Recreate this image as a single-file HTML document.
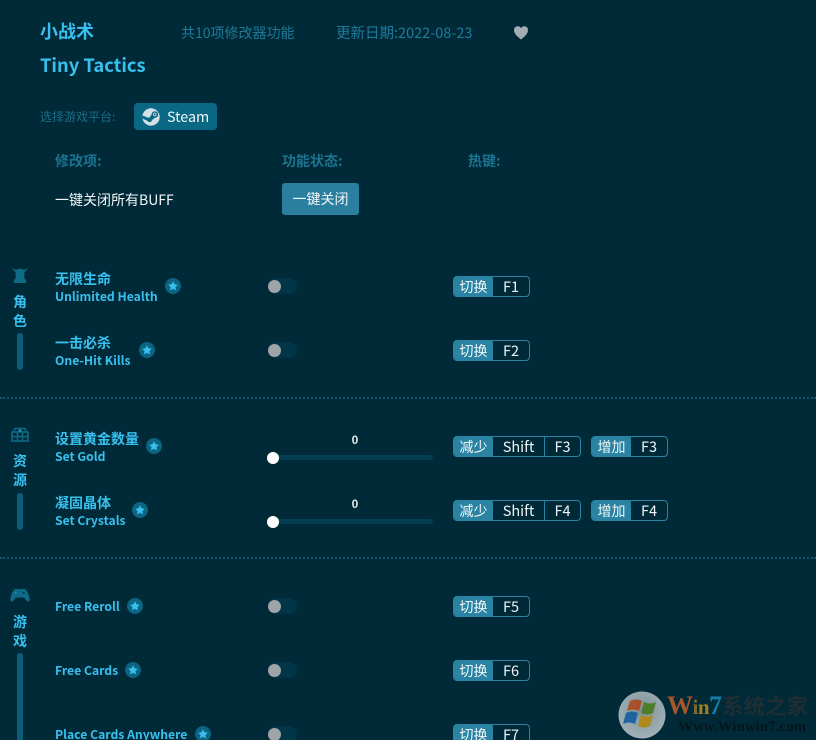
<!DOCTYPE html>
<html lang="zh">
<head>
<meta charset="utf-8">
<title>小战术 Tiny Tactics</title>
<style>
html,body{margin:0;padding:0;width:816px;height:740px;overflow:hidden;background:#002a38}
body{position:relative;font-family:"Liberation Sans","Noto Sans CJK SC",sans-serif}
.cj{font-family:"Noto Sans CJK SC","Liberation Sans",sans-serif}
.t{position:absolute;white-space:nowrap}
.cn{font-size:14px;font-weight:700;color:#38c0ee;line-height:18px;left:55px;font-family:"Noto Sans CJK SC",sans-serif}
.en{font-size:12.200px;font-weight:700;color:#38c0ee;line-height:16px;left:55px;font-family:"Noto Sans CJK SC",sans-serif}
.star{position:absolute;width:16px;height:16px;border-radius:50%;background:#0c6482}
.star svg{position:absolute;left:3px;top:3px;width:10px;height:10px}
.tog{position:absolute;left:268px;width:29px;height:16px;border-radius:8px;background:#013648}
.tog i{position:absolute;left:0;top:1.500px;width:13px;height:13px;border-radius:50%;background:#9ea4a8}
.key{position:absolute;height:19px;border:1px solid #2a83a2;border-radius:4px;display:flex;overflow:hidden;font-family:"Noto Sans CJK SC",sans-serif;font-size:14.500px;line-height:20px;color:#eef5f7}
.key b{font-weight:400;background:#2a83a2;width:39px;text-align:center;font-size:14px;color:#f0f7f9}
.key span{display:block;text-align:center;border-left:1px solid #2a83a2}
.key span:first-of-type{border-left:0}
.sl{position:absolute;left:273px;width:160px;height:5px;background:#013e52;border-radius:0 3px 3px 0}
.knob{position:absolute;left:267px;width:12px;height:12px;border-radius:50%;background:#fff}
.val{position:absolute;left:345px;width:20px;text-align:center;font-size:12px;font-weight:700;color:#dfe9ed;line-height:14px}
.side{position:absolute;left:12px;width:16px;text-align:center;font-size:14px;font-weight:700;color:#38c0ee;line-height:19px;font-family:"Noto Sans CJK SC",sans-serif}
.bar{position:absolute;left:17px;width:6px;border-radius:3px;background:#0b5d78}
.dash{position:absolute;left:0;width:816px;height:0;border-top:2px dotted #11566c}
</style>
</head>
<body>
<div class="t cj" style="left:40px;top:20px;font-size:18px;font-weight:700;color:#38c0ee;line-height:22px">小战术</div>
<div class="t cj" style="left:40px;top:54px;font-size:18.300px;font-weight:700;color:#38c0ee;line-height:23px">Tiny Tactics</div>
<div class="t cj" style="left:181px;top:24px;font-size:14px;color:#1f7b99;line-height:18px">共10项修改器功能</div>
<div class="t cj" style="left:336px;top:23px;font-size:14.500px;color:#1f7b99;line-height:19px">更新日期:2022-08-23</div>
<svg style="position:absolute;left:513px;top:25px" width="16" height="15" viewBox="0 0 16 15"><path d="M8 14.500C5 12 1 9 1 5a3.700 3.700 0 0 1 7-1.700A3.700 3.700 0 0 1 15 5c0 4-4 7-7 9.500z" fill="#a3adb3"/></svg>

<div class="t cj" style="left:40px;top:108px;font-size:12px;color:#1a6d89;line-height:17px">选择游戏平台:</div>
<div style="position:absolute;left:134px;top:103px;width:83px;height:27px;border-radius:4px;background:#0a6884"></div>
<svg style="position:absolute;left:142px;top:107.500px" width="18" height="18" viewBox="0 0 18 18"><circle cx="9" cy="9" r="8.700" fill="#d5dfe8"/><path d="M.3 10.500l5 2.200a2.500 2.500 0 0 0 4.700-.6l3-2.300a3.300 3.300 0 1 0-3.400-3.400L7.700 9.500a2.500 2.500 0 0 0-1.500.3L.5 7.500z" fill="#0a6884"/><circle cx="12.800" cy="6.400" r="1.800" fill="#d5dfe8"/><circle cx="12.800" cy="6.400" r="1" fill="#0a6884"/></svg>
<div class="t cj" style="left:167px;top:107px;font-size:14.300px;color:#f2f7f9;line-height:19px">Steam</div>

<div class="t cj" style="left:55px;top:152px;font-size:14px;font-weight:700;color:#1c7491;line-height:18px">修改项:</div>
<div class="t cj" style="left:282px;top:152px;font-size:14px;font-weight:700;color:#1c7491;line-height:18px">功能状态:</div>
<div class="t cj" style="left:468px;top:152px;font-size:14px;font-weight:700;color:#1c7491;line-height:18px">热键:</div>
<div class="t cj" style="left:55px;top:191px;font-size:14px;color:#f2f7f9;line-height:19px">一键关闭所有BUFF</div>
<div class="t cj" style="left:282px;top:183px;width:77px;height:32px;border-radius:3px;background:#2a7f9e;color:#f2f7f9;font-size:14px;line-height:32px;text-align:center">一键关闭</div>

<!-- 角色 -->
<svg style="position:absolute;left:12px;top:267px" width="16" height="16" viewBox="0 0 16 16"><path d="M0 .5C.8 3 2 4.500 3.500 4.800L3.800 10 3 12.500H2V16h12v-3.500h-1L12.200 10l.3-5.200C14 4.500 15.200 3 16 .5 14.500 2 13 2.800 11.500 2.800 10 1.500 6 1.500 4.500 2.800 3 2.800 1.500 2 0 .5z" fill="#0f6a88"/></svg>
<div class="side" style="top:293px">角<br>色</div>
<div class="bar" style="top:333px;height:37px"></div>

<div class="t cn" style="top:270px">无限生命</div>
<div class="t en" style="top:288px">Unlimited Health</div>
<div class="star" style="left:165px;top:278px"><svg viewBox="0 0 10 10"><path d="M5 .3l1.500 3 3.300.5-2.400 2.300.6 3.300L5 7.800 2 9.400l.6-3.300L.2 3.800l3.300-.5z" fill="#38c0ee"/></svg></div>
<div class="tog" style="top:278px"><i></i></div>
<div class="key" style="left:453px;top:276px;width:75px"><b>切换</b><span style="width:36px">F1</span></div>

<div class="t cn" style="top:334px">一击必杀</div>
<div class="t en" style="top:352px">One-Hit Kills</div>
<div class="star" style="left:139px;top:342px"><svg viewBox="0 0 10 10"><path d="M5 .3l1.500 3 3.300.5-2.400 2.300.6 3.300L5 7.800 2 9.400l.6-3.300L.2 3.800l3.300-.5z" fill="#38c0ee"/></svg></div>
<div class="tog" style="top:342px"><i></i></div>
<div class="key" style="left:453px;top:340px;width:75px"><b>切换</b><span style="width:36px">F2</span></div>

<div class="dash" style="top:397px"></div>

<!-- 资源 -->
<svg style="position:absolute;left:11px;top:427px" width="18" height="15" viewBox="0 0 18 15" fill="none" stroke="#0f6a88" stroke-width="1.600"><path d="M1 5h16v9H1zM1 9.500h16M6.500 5v9M11.500 5v9M3 5l1-4M15 5l-1-4M4 1.500h10"/><rect x="7.500" y="2.500" width="3" height="2.500" fill="#1c93b5" stroke="none"/></svg>
<div class="side" style="top:452px">资<br>源</div>
<div class="bar" style="top:493px;height:37px"></div>

<div class="t cn" style="top:430px">设置黄金数量</div>
<div class="t en" style="top:448px">Set Gold</div>
<div class="star" style="left:146px;top:438px"><svg viewBox="0 0 10 10"><path d="M5 .3l1.500 3 3.300.5-2.400 2.300.6 3.300L5 7.800 2 9.400l.6-3.300L.2 3.800l3.300-.5z" fill="#38c0ee"/></svg></div>
<div class="val" style="top:433px">0</div>
<div class="sl" style="top:455px"></div><div class="knob" style="top:452px"></div>
<div class="key" style="left:453px;top:436px;width:126px"><b>减少</b><span style="width:51px;border-left:0">Shift</span><span style="width:35px">F3</span></div>
<div class="key" style="left:591px;top:436px;width:75px"><b>增加</b><span style="width:36px">F3</span></div>

<div class="t cn" style="top:494px">凝固晶体</div>
<div class="t en" style="top:512px">Set Crystals</div>
<div class="star" style="left:132px;top:502px"><svg viewBox="0 0 10 10"><path d="M5 .3l1.500 3 3.300.5-2.400 2.300.6 3.300L5 7.800 2 9.400l.6-3.300L.2 3.800l3.300-.5z" fill="#38c0ee"/></svg></div>
<div class="val" style="top:497px">0</div>
<div class="sl" style="top:519px"></div><div class="knob" style="top:516px"></div>
<div class="key" style="left:453px;top:500px;width:126px"><b>减少</b><span style="width:51px;border-left:0">Shift</span><span style="width:35px">F4</span></div>
<div class="key" style="left:591px;top:500px;width:75px"><b>增加</b><span style="width:36px">F4</span></div>

<div class="dash" style="top:557px"></div>

<!-- 游戏 -->
<svg style="position:absolute;left:10px;top:587px" width="20" height="15" viewBox="0 0 20 15"><path d="M5 2c1.500-.8 3 .2 5 .2S13.500 1.200 15 2c2.500 1.300 4.500 8 4.800 10.500.2 1.800-1.800 2.500-3 1.200L14 10.500H6L3.200 13.700c-1.200 1.300-3.200.6-3-1.200C.5 10 2.500 3.300 5 2z" fill="#0f6a88"/><rect x="5" y="5" width="1.500" height="1.500" fill="#1c93b5"/><rect x="13" y="5" width="1.500" height="1.500" fill="#002a38"/></svg>
<div class="side" style="top:613px">游<br>戏</div>
<div class="bar" style="top:653px;height:87px;border-radius:3px 3px 0 0"></div>

<div class="t en" style="top:598px">Free Reroll</div>
<div class="star" style="left:127px;top:598px"><svg viewBox="0 0 10 10"><path d="M5 .3l1.500 3 3.300.5-2.400 2.300.6 3.300L5 7.800 2 9.400l.6-3.300L.2 3.800l3.300-.5z" fill="#38c0ee"/></svg></div>
<div class="tog" style="top:598px"><i></i></div>
<div class="key" style="left:453px;top:596px;width:75px"><b>切换</b><span style="width:36px">F5</span></div>

<div class="t en" style="top:662px">Free Cards</div>
<div class="star" style="left:125px;top:662px"><svg viewBox="0 0 10 10"><path d="M5 .3l1.500 3 3.300.5-2.400 2.300.6 3.300L5 7.800 2 9.400l.6-3.300L.2 3.800l3.300-.5z" fill="#38c0ee"/></svg></div>
<div class="tog" style="top:662px"><i></i></div>
<div class="key" style="left:453px;top:660px;width:75px"><b>切换</b><span style="width:36px">F6</span></div>

<div class="t en" style="top:726px">Place Cards Anywhere</div>
<div class="star" style="left:195px;top:726px"><svg viewBox="0 0 10 10"><path d="M5 .3l1.500 3 3.300.5-2.400 2.300.6 3.300L5 7.800 2 9.400l.6-3.300L.2 3.800l3.300-.5z" fill="#38c0ee"/></svg></div>
<div class="tog" style="top:726px"><i></i></div>
<div class="key" style="left:453px;top:724px;width:75px"><b>切换</b><span style="width:36px">F7</span></div>

<!-- watermark -->
<svg style="position:absolute;left:618px;top:691px" width="48" height="48" viewBox="0 0 48 48">
<defs><radialGradient id="g" cx=".5" cy=".4" r=".6"><stop offset="0" stop-color="#7d9098"/><stop offset="1" stop-color="#a3b2b8"/></radialGradient></defs>
<circle cx="24" cy="24" r="23.500" fill="url(#g)"/>
<path d="M12 10c4-2 8-2 12 0l-3 10c-4-2-8-2-12 0z" fill="#a8502a"/>
<path d="M26 11c4 2 8 2 12 0l-3 11c-4 2-8 2-12 0z" fill="#4f7d2c"/>
<path d="M8 22c4-2 8-2 12 0l-3 11c-4-2-8-2-12 0z" fill="#1f64a0"/>
<path d="M23 24c4 2 8 2 12 0l-3 11c-4 2-8 2-12 0z" fill="#b08a1e"/>
</svg>
<div class="t" style="left:667px;top:692px;font-family:'Liberation Serif',serif;font-weight:700;font-size:26px;line-height:28px;letter-spacing:-.5px"><span style="color:#a8552a">W</span><span style="color:#7d6a2c;font-size:21px">i</span><span style="color:#a37f22;font-size:21px">n</span><span style="color:#137ea8">7</span></div>
<div class="t cj" style="left:722px;top:693px;font-size:21.500px;font-weight:700;color:#1f2e33;line-height:26px">系统之家</div>
<div class="t" style="left:678px;top:719px;font-family:'Liberation Serif',serif;font-weight:700;font-size:15px;color:#06151b;line-height:16px">Www.Winwin7.com</div>
</body>
</html>
